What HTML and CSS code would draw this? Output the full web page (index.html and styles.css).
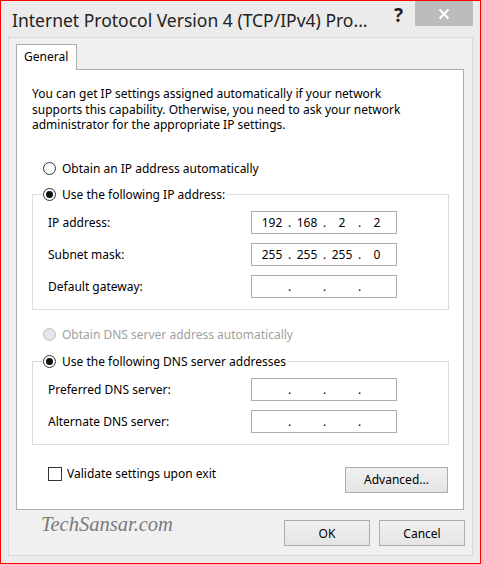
FILE: index.html
```html
<!DOCTYPE html>
<html lang="en">
<head>
    <meta charset="UTF-8">
    <meta name="viewport" content="width=device-width, initial-scale=1.0">
    <title>Internet Protocol Version 4 (TCP/IPv4) Properties</title>
    <link rel="stylesheet" href="styles.css">
</head>
<body>
    <div class="window">
        <div class="titlebar">
            <div class="title">Internet Protocol Version 4 (TCP/IPv4) Pro...</div>
            <div class="help">?</div>
            <div class="close">
                <svg width="12" height="12" viewBox="0 0 12 12">
                    <path d="M1.5 1.5 L10.5 10.5 M10.5 1.5 L1.5 10.5" stroke="#fff" stroke-width="2.2" fill="none"/>
                </svg>
            </div>
        </div>
        <div class="frame">
            <div class="tabs">
                <div class="tab">General</div>
            </div>
            <div class="panel">
                <p class="intro">You can get IP settings assigned automatically if your network<br>supports this capability. Otherwise, you need to ask your network<br>administrator for the appropriate IP settings.</p>

                <div class="option first"><span class="radio"></span>Obtain an IP address automatically</div>
                <fieldset class="group">
                    <legend class="option"><span class="radio checked"></span>Use the following IP address:</legend>
                    <div class="field">
                        <span class="label">IP address:</span>
                        <div class="ip"><span class="oct">192</span><span class="dot">.</span><span class="oct">168</span><span class="dot">.</span><span class="oct">2</span><span class="dot">.</span><span class="oct">2</span></div>
                    </div>
                    <div class="field">
                        <span class="label">Subnet mask:</span>
                        <div class="ip"><span class="oct">255</span><span class="dot">.</span><span class="oct">255</span><span class="dot">.</span><span class="oct">255</span><span class="dot">.</span><span class="oct">0</span></div>
                    </div>
                    <div class="field">
                        <span class="label">Default gateway:</span>
                        <div class="ip"><span class="oct"></span><span class="dot">.</span><span class="oct"></span><span class="dot">.</span><span class="oct"></span><span class="dot">.</span><span class="oct"></span></div>
                    </div>
                </fieldset>

                <div class="option disabled dns-auto"><span class="radio"></span>Obtain DNS server address automatically</div>
                <fieldset class="group dns">
                    <legend class="option"><span class="radio checked"></span>Use the following DNS server addresses</legend>
                    <div class="field">
                        <span class="label">Preferred DNS server:</span>
                        <div class="ip"><span class="oct"></span><span class="dot">.</span><span class="oct"></span><span class="dot">.</span><span class="oct"></span><span class="dot">.</span><span class="oct"></span></div>
                    </div>
                    <div class="field">
                        <span class="label">Alternate DNS server:</span>
                        <div class="ip"><span class="oct"></span><span class="dot">.</span><span class="oct"></span><span class="dot">.</span><span class="oct"></span><span class="dot">.</span><span class="oct"></span></div>
                    </div>
                </fieldset>

                <div class="panel-footer">
                    <div class="check"><span class="box"></span>Validate settings upon exit</div>
                    <button class="btn advanced">Advanced...</button>
                </div>
            </div>
            <div class="actions">
                <span class="watermark">TechSansar.com</span>
                <button class="btn ok">OK</button>
                <button class="btn cancel">Cancel</button>
            </div>
        </div>
    </div>
</body>
</html>
```

FILE: styles.css
```css
* {
    box-sizing: border-box;
}

body {
    margin: 0;
    font-family: "Noto Sans", sans-serif;
    font-size: 12px;
    color: #000;
}

.window {
    width: 481px;
    height: 564px;
    border: 1px solid #f00;
    background-color: #ebebeb;
    display: flex;
    flex-direction: column;
}

/* title bar */
.titlebar {
    height: 36px;
    display: flex;
    align-items: flex-start;
}

.title {
    margin: 7px 0 0 11px;
    font-size: 17.5px;
    line-height: 25px;
    color: #222;
    white-space: nowrap;
}

.help {
    margin: 2px 12px 0 auto;
    font-size: 19px;
    font-weight: bold;
    line-height: 24px;
    color: #222;
}

.close {
    width: 58px;
    height: 25px;
    margin-right: 7px;
    background-color: #bcbcbc;
    display: flex;
    align-items: center;
    justify-content: center;
}

/* dialog body */
.frame {
    flex: 1;
    margin: 0 7px 7px 7px;
    padding: 6px 8px 0 7px;
    border: 1px solid #dadada;
    background-color: #f0f0f0;
    display: flex;
    flex-direction: column;
}

.tabs {
    display: flex;
}

.tab {
    position: relative;
    z-index: 1;
    width: 61px;
    height: 26px;
    margin-bottom: -1px;
    padding-left: 7px;
    border: 1px solid #acacac;
    border-bottom: none;
    background-color: #fff;
    line-height: 24px;
}

.panel {
    height: 441px;
    padding: 16px 14px 0 15px;
    border: 1px solid #adadad;
    background-color: #fff;
}

.intro {
    margin: 0;
    line-height: 15.5px;
}

.option {
    display: flex;
    align-items: center;
    height: 16px;
    white-space: nowrap;
}

.option.first {
    margin-top: 28px;
    padding-left: 11px;
}

.radio {
    width: 13px;
    height: 13px;
    margin-right: 6px;
    border: 1px solid #333;
    border-radius: 50%;
    background-color: #fff;
    display: flex;
    align-items: center;
    justify-content: center;
}

.radio.checked::after {
    content: "";
    width: 7px;
    height: 7px;
    border-radius: 50%;
    background-color: #111;
}

.option.disabled {
    color: #a0a0a0;
}

.option.disabled .radio {
    border-color: #bcbcbc;
    background-color: #e6e6e6;
}

.group {
    margin: 10px 0 0 0;
    padding: 8px 0 11px 10px;
    border: 1px solid #dcdcdc;
    min-width: 0;
}

.group legend {
    padding: 0 2px 0 0;
}

.field {
    display: flex;
    align-items: center;
    height: 23px;
    margin-top: 9px;
}

.field:first-of-type {
    margin-top: 0;
}

.label {
    flex: 0 0 208px;
    padding-left: 5px;
}

.ip {
    width: 146px;
    height: 23px;
    padding-left: 4px;
    border: 1px solid #ababab;
    display: flex;
    align-items: center;
}

.oct {
    width: 32px;
    text-align: center;
}

.dot {
    width: 3px;
    text-align: center;
}

.dns-auto {
    margin-top: 17px;
    padding-left: 11px;
}

.group.dns {
    margin-top: 11px;
}

.panel-footer {
    display: flex;
    align-items: flex-start;
    margin-top: 22px;
}

.check {
    display: flex;
    align-items: center;
    height: 14px;
    margin-left: 16px;
}

.box {
    width: 14px;
    height: 14px;
    margin-right: 5px;
    border: 1px solid #333;
    background-color: #fff;
}

.btn {
    height: 26px;
    padding: 0;
    border: 1px solid #acacac;
    background: linear-gradient(#f0f0f0, #e5e5e5);
    font-family: "Noto Sans", sans-serif;
    font-size: 12px;
    color: #000;
}

.advanced {
    width: 103px;
    margin: 0 1px 0 auto;
}

.actions {
    display: flex;
    align-items: flex-start;
    margin-right: -1px;
}

.watermark {
    margin: 3px 0 0 25px;
    font-family: "Liberation Serif", serif;
    font-style: italic;
    font-size: 20.5px;
    line-height: 22px;
    color: #7a7a80;
}

.ok,
.cancel {
    width: 86px;
    margin-top: 10px;
}

.ok {
    margin-left: auto;
}

.cancel {
    margin-left: 9px;
}
```
